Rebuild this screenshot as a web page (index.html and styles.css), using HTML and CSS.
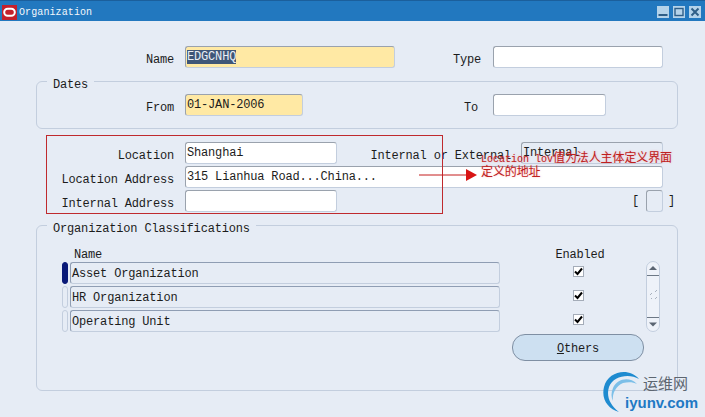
FILE: index.html
```
<!DOCTYPE html>
<html lang="en">
<head>
<meta charset="utf-8">
<title>Organization</title>
<link rel="stylesheet" href="styles.css">
</head>
<body>
<div class="window">
  <header class="titlebar">
    <svg class="logo" width="15" height="15" viewBox="0 0 15 15"><rect width="15" height="15" fill="#c4202c"/><rect x="2.2" y="3.8" width="10.6" height="7" rx="3.5" fill="none" stroke="#fff" stroke-width="2"/></svg>
    <span class="title">Organization</span>
    <div class="winbtns">
      <span class="winbtn"><svg width="12" height="12" viewBox="0 0 12 12"><rect x="1.5" y="8" width="9" height="2" fill="#2f5f88"/></svg></span>
      <span class="winbtn"><svg width="12" height="12" viewBox="0 0 12 12"><rect x="2" y="2.5" width="8" height="7" fill="none" stroke="#2f5f88" stroke-width="1.4"/></svg></span>
      <span class="winbtn"><svg width="12" height="12" viewBox="0 0 12 12"><path d="M2.5 2.5l7 7M9.500 2.500l-7 7" stroke="#2f5f88" stroke-width="2"/></svg></span>
    </div>
  </header>

  <main class="form">
    <div class="row row-top">
      <label class="label w-main">Name</label>
      <div class="field required w-name"><span class="selected">EDGCNHQ</span></div>
      <label class="label w-type">Type</label>
      <div class="field w-typef"></div>
    </div>

    <section class="group dates">
      <span class="legend">Dates</span>
      <div class="row">
        <label class="label w-from">From</label>
        <div class="field required w-date">01-JAN-2006</div>
        <label class="label w-to">To</label>
        <div class="field w-dateto"></div>
      </div>
    </section>

    <section class="location">
      <div class="row">
        <label class="label w-main">Location</label>
        <div class="field w-loc">Shanghai</div>
        <label class="label w-ie">Internal or External</label>
        <div class="field readonly w-ief">Internal</div>
      </div>
      <div class="row">
        <label class="label w-main">Location Address</label>
        <div class="field w-addr">315 Lianhua Road...China...</div>
      </div>
      <div class="row">
        <label class="label w-main">Internal Address</label>
        <div class="field w-loc"></div>
        <div class="flexfield">
          <span>[</span><div class="field readonly w-box"></div><span>]</span>
        </div>
      </div>
    </section>

    <section class="group classes">
      <span class="legend">Organization Classifications</span>
      <div class="class-body">
        <div class="col-names">
          <div class="col-head name-head">Name</div>
          <div class="rec"><span class="indicator current"></span><div class="field rec-field">Asset Organization</div></div>
          <div class="rec"><span class="indicator"></span><div class="field rec-field">HR Organization</div></div>
          <div class="rec"><span class="indicator"></span><div class="field rec-field">Operating Unit</div></div>
        </div>
        <div class="col-enabled">
          <div class="col-head enabled-head">Enabled</div>
          <div class="check-cell"><span class="check"><svg width="9" height="9" viewBox="0 0 9 9"><path d="M1 4.500l2.500 2.500L8 1.500" fill="none" stroke="#000" stroke-width="2"/></svg></span></div>
          <div class="check-cell"><span class="check"><svg width="9" height="9" viewBox="0 0 9 9"><path d="M1 4.500l2.500 2.500L8 1.500" fill="none" stroke="#000" stroke-width="2"/></svg></span></div>
          <div class="check-cell"><span class="check"><svg width="9" height="9" viewBox="0 0 9 9"><path d="M1 4.500l2.500 2.500L8 1.500" fill="none" stroke="#000" stroke-width="2"/></svg></span></div>
          <button class="others"><u>O</u>thers</button>
        </div>
        <svg class="scroll" width="14" height="71" viewBox="0 0 14 71">
          <rect x=".5" y=".5" width="13" height="70" rx="6.500" fill="#eef2f9" stroke="#c3cede"/>
          <path d="M7 5l4 4H3z" fill="#5b6572"/>
          <path d="M1 14.500h12M1 56.500h12" stroke="#6d7886"/>
          <path d="M7 62.500l4-4H3z" transform="translate(0 3)" fill="#5b6572"/>
          <path d="M4 34l2-2M9 31l2-2M5 38l1-1M9 38l2-2" stroke="#a9b2bf"/>
        </svg>
      </div>
    </section>
  </main>

  <!-- annotation drawn on top of the screenshot -->
  <div class="note-box"></div>
  <svg class="note-arrow" width="58" height="14" viewBox="0 0 58 14"><path d="M0 7h48" stroke="#c41c1c"/><path d="M47 1l11 6-11 6z" fill="#d81414"/></svg>
  <div class="note-text">
    <div class="note-line"><span class="note-latin">Location lov</span>值为法人主体定义界面</div>
    <div class="note-line">定义的地址</div>
  </div>

  <div class="watermark">
    <svg class="wm-arc" width="40" height="42" viewBox="0 0 40 42"><path d="M37 9C27-3 6 1 2 17c-3 12 4 22 15 25C8 35 4 26 7 17 11 6 27 3 37 9z" fill="#1e8bd0"/><path d="M35 14C27 6 15 9 11 18c-2 5-2 9 0 13-1-8 3-15 10-18 5-1 10-1 14 1z" fill="#7cbfe8"/></svg>
    <span class="wm-cn">运维网</span>
    <span class="wm-en">iyunv.com</span>
  </div>
</div>
</body>
</html>
```

FILE: styles.css
```
* { box-sizing: border-box; }
html, body { margin: 0; padding: 0; }
body { width: 705px; height: 417px; overflow: hidden; background: #e6ecf5; }

.window {
  position: relative;
  width: 705px;
  height: 417px;
  background: #e6ecf5;
  color: #1c1c1c;
  font: 12px/14px "Liberation Mono", "Noto Sans CJK SC", monospace;
  letter-spacing: -0.17px;
}

.titlebar {
  display: flex;
  align-items: center;
  height: 21px;
  padding: 2px 4px 0 2px;
  background: #2278bf;
  border-top: 1px solid #1b5f9c;
  color: #f2f7fb;
}
.logo { flex: none; }
.title { margin-left: 2px; padding-top: 1px; font-size: 10px; letter-spacing: 0.1px; }
.winbtns { display: flex; gap: 4px; margin-left: auto; }
.winbtn { display: block; width: 12px; height: 12px; background: #b4d3ea; }
.winbtn svg { display: block; }

.form { display: flex; flex-direction: column; }
.row { display: flex; align-items: center; gap: 2px; }
.row-top { margin-top: 25px; }

.label { flex: none; padding-top: 5px; text-align: right; white-space: nowrap; margin-right: 9px; }
.w-main { width: 174px; }
.w-type { width: 84px; margin-right: 10px; }
.w-from { width: 137px; }
.w-to { width: 173px; margin-right: 13px; }
.w-ie { width: 172px; margin-right: 8px; }

.field {
  flex: none;
  height: 22px;
  padding: 2px 2px 0 1px;
  background: #fff;
  border: 1px solid;
  border-color: #9aa2ad #c3cede #c3cede #9aa2ad;
  border-radius: 3px;
  line-height: 16px;
  white-space: nowrap;
  overflow: hidden;
}
.required { background: #ffe9a4; }
.readonly { background: #e6ecf5; }
.selected { background: #3f5677; color: #e9eef5; }

.w-name { width: 210px; }
.w-typef { width: 170px; }
.w-date { width: 118px; }
.w-dateto { width: 113px; }
.w-loc { width: 152px; }
.w-ief { width: 142px; }
.w-addr { width: 478px; }
.w-box { width: 17px; }

.rec-field {
  width: 430px;
  padding-top: 3px;
  background: #e6ecf5;
  border-color: #8f9db3 #c3cede #c3cede #8f9db3;
}

.group {
  position: relative;
  width: 642px;
  margin-left: 36px;
  border: 1px solid #c3cede;
  border-radius: 6px;
}
.legend {
  position: absolute;
  top: -4px;
  left: 10px;
  z-index: 1;
  padding: 0 6px;
  background: #e6ecf5;
  line-height: 14px;
}
.dates { height: 48px; margin-top: 13px; padding-top: 12px; }

.location { display: flex; flex-direction: column; gap: 2px; margin-top: 13px; }
.flexfield { display: flex; align-items: center; margin-left: auto; margin-right: 30px; }
.flexfield .field { margin: 0 5px 0 7px; }

.classes { height: 166px; margin-top: 13px; }
.class-body { display: flex; padding: 22px 0 0 25px; }
.col-names { display: flex; flex-direction: column; gap: 2px; width: 438px; }
.col-head { height: 14px; text-align: center; line-height: 14px; }
.name-head { margin-bottom: -2px; padding-left: 12px; text-align: left; }
.enabled-head { padding-left: 4px; }
.rec { display: flex; gap: 2px; }
.indicator {
  flex: none;
  width: 6px;
  height: 22px;
  background: #e6ecf5;
  border: 1px solid #c3cede;
  border-radius: 3px;
}
.indicator.current { background: #0a1a78; border-color: #0a1a78; }

.col-enabled { display: flex; flex-direction: column; width: 132px; margin-left: 12px; }
.check-cell { display: flex; justify-content: center; align-items: flex-start; height: 24px; padding-top: 4px; }
.check {
  display: flex;
  align-items: center;
  justify-content: center;
  width: 11px;
  height: 11px;
  background: #fff;
  border: 1px solid #a4acb8;
}
.others {
  height: 27px;
  padding: 2px 0 0;
  background: #cde0f1;
  border: 1px solid #7f8fa3;
  border-radius: 13px;
  color: #1c1c1c;
  font: inherit;
  letter-spacing: inherit;
}
.scroll { flex: none; margin: 13px 0 0 2px; }

.note-box {
  position: absolute;
  left: 46px;
  top: 135px;
  width: 397px;
  height: 79px;
  border: 1px solid #bf2a2e;
}
.note-arrow { position: absolute; left: 419px; top: 168px; }
.note-text {
  position: absolute;
  left: 481px;
  top: 150px;
  color: #bd2020;
  font: 12px "Noto Sans CJK SC", sans-serif;
  letter-spacing: -0.1px;
  text-shadow: 0 0 2px rgba(255, 120, 120, .55);
  white-space: nowrap;
}
.note-line { height: 14px; line-height: 14px; }
.note-latin { font: 10px/13px "Liberation Mono", monospace; letter-spacing: 0; }

.watermark { position: absolute; left: 600px; top: 369px; width: 105px; height: 48px; }
.wm-arc { position: absolute; left: 2px; top: 1px; }
.wm-cn {
  position: absolute;
  left: 43px;
  top: 5px;
  color: #5d6670;
  font: 15px/18px "Noto Sans CJK SC", sans-serif;
  letter-spacing: 0;
}
.wm-en {
  position: absolute;
  left: 25px;
  top: 25px;
  color: #1e79c4;
  font: bold 15px/17px "Liberation Sans", sans-serif;
  letter-spacing: 0;
}
```
